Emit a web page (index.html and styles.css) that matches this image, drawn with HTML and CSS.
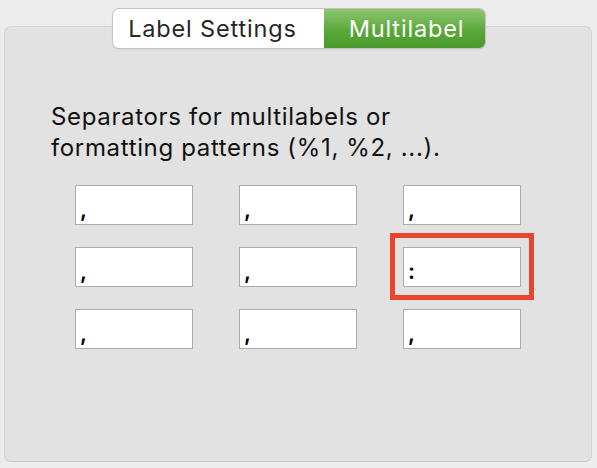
FILE: index.html
```html
<!DOCTYPE html>
<html>
<head>
<meta charset="utf-8">
<link rel="stylesheet" href="styles.css">
</head>
<body>
<div class="window">
  <div class="tabs">
    <div class="seg seg-off">Label Settings</div>
    <div class="seg seg-on">Multilabel</div>
  </div>
  <div class="panel">
    <p class="desc">Separators for multilabels or<br>formatting patterns (%1, %2, ...).</p>
    <div class="grid">
      <div class="cell"><div class="field">,</div></div>
      <div class="cell"><div class="field">,</div></div>
      <div class="cell"><div class="field">,</div></div>
      <div class="cell"><div class="field">,</div></div>
      <div class="cell"><div class="field">,</div></div>
      <div class="cell hl"><div class="field">:</div></div>
      <div class="cell"><div class="field">,</div></div>
      <div class="cell"><div class="field">,</div></div>
      <div class="cell"><div class="field">,</div></div>
    </div>
  </div>
</div>
</body>
</html>
```
FILE: styles.css
```css
html, body {
  margin: 0;
  padding: 0;
  background: #ececec;
  width: 597px;
  height: 468px;
  overflow: hidden;
  font-family: Inter, "Liberation Sans", sans-serif;
}
.window {
  padding: 9px 5px 0 4px;
  display: flex;
  flex-direction: column;
}
.tabs {
  position: relative;
  z-index: 2;
  align-self: center;
  display: flex;
  height: 39px;
  margin-left: 2px;
  border-radius: 6px;
  box-shadow: 0 0 0 1px #c4c4c4, 0 1px 2px rgba(0,0,0,0.18);
  overflow: hidden;
}
.seg {
  display: flex;
  align-items: center;
  justify-content: center;
  font-size: 23.5px;
  letter-spacing: 0.85px;
  height: 39px;
}
.seg-off {
  width: 211px;
  background: #ffffff;
  color: #262626;
  padding-right: 12px;
  box-sizing: border-box;
}
.seg-on {
  width: 161px;
  background: linear-gradient(#8fc672, #5aa83a 55%, #4a9a2b);
  color: #ffffff;
  padding-left: 4px;
  box-sizing: border-box;
}
.panel {
  margin-top: -22px;
  height: 436px;
  box-sizing: border-box;
  background: #e2e2e2;
  border: 1px solid #d3d3d3;
  border-bottom-color: #c8c8c8;
  border-radius: 7px;
  padding: 74px 0 0 46px;
}
.desc {
  margin: 0;
  font-size: 24px;
  line-height: 31px;
  color: #111;
  letter-spacing: 0.65px;
}
.grid {
  margin: 22px 0 0 24px;
  display: grid;
  grid-template-columns: repeat(3, 118px);
  grid-auto-rows: 40px;
  column-gap: 46px;
  row-gap: 22px;
}
.cell {
  position: relative;
}
.field {
  box-sizing: border-box;
  height: 40px;
  background: #fff;
  border: 1px solid #acacac;
  font-size: 22px;
  font-weight: 600;
  line-height: 22px;
  color: #000;
  padding: 12px 0 0 4px;
}
.hl::before {
  content: "";
  position: absolute;
  left: -13px;
  top: -14px;
  right: -13px;
  bottom: -13px;
  border: 5px solid #e8452c;
}
```
